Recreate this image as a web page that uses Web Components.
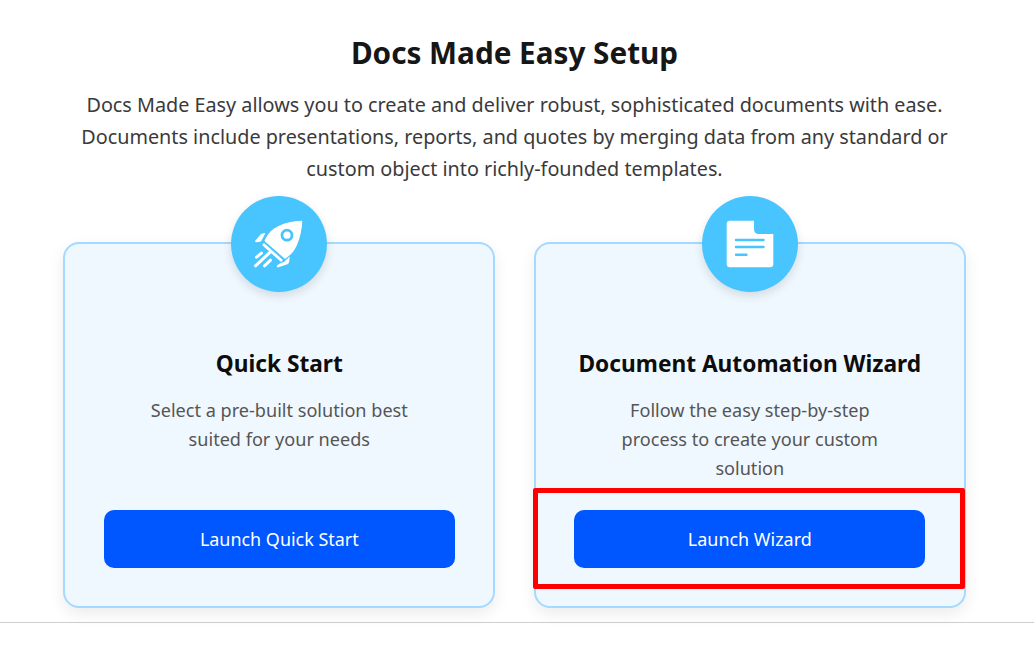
<!DOCTYPE html>
<html lang="en">
<head>
<meta charset="utf-8">
<title>Docs Made Easy Setup</title>
<style>
  html, body { margin: 0; padding: 0; background: #fff; }
  body { font-family: "Noto Sans", "Open Sans", sans-serif; }
</style>
</head>
<body>
<setup-page>
  <setup-card slot="cards" heading="Quick Start" action="Launch Quick Start" icon="rocket">
    Select a pre-built solution best<br>suited for your needs
  </setup-card>
  <setup-card slot="cards" heading="Document Automation Wizard" action="Launch Wizard" icon="doc" marked>
    Follow the easy step-by-step<br>process to create your custom<br>solution
  </setup-card>
</setup-page>
<script>
const setupPage = document.createElement('template')
setupPage.innerHTML = `
<style>
  :host {
    display: block;
    height: 656px;
    overflow: hidden;
  }
  header {
    text-align: center;
    padding: 32px 5px 0 0;
    height: 210px;
    box-sizing: border-box;
  }
  h1 {
    margin: 0;
    font-size: 29.7px;
    line-height: 42px;
    font-weight: 700;
    color: #161616;
  }
  p {
    margin: 15px 0 0;
    font-size: 19.8px;
    line-height: 32px;
    color: #3a3a3a;
  }
  .cards {
    display: grid;
    grid-template-columns: 432px 432px;
    column-gap: 38.5px;
    justify-content: start;
    padding: 32px 0 0 63.3px;
  }
  .rule {
    height: 1px;
    background: #cfcfcf;
    margin-top: 14px;
  }
</style>
<header>
  <h1>Docs Made Easy Setup</h1>
  <p>Docs Made Easy allows you to create and deliver robust, sophisticated documents with ease.<br>Documents include presentations, reports, and quotes by merging data from any standard or<br>custom object into richly-founded templates.</p>
</header>
<div class="cards"><slot name="cards"></slot></div>
<div class="rule"></div>
`

class SetupPage extends HTMLElement {
  constructor () {
    super()
    this.attachShadow({ mode: 'open' })
    this.shadowRoot.appendChild(setupPage.content.cloneNode(true))
  }
}

const icons = {
  rocket: `
    <path fill="#fff" d="M71.3 24.7C60 24.7 48 28 40 35C37.5 37.5 35 41 33.5 45L54 63C60 59 64 54 66 49C69 42 71 33 71.3 24.7Z"/>
    <circle cx="56" cy="39.2" r="5" fill="#fff" stroke="#48c4ff" stroke-width="2.8"/>
    <path fill="none" stroke="#fff" stroke-width="2.8" d="M32 48L51 65"/>
    <path fill="#fff" d="M34.5 37L31.5 37.4C30.5 37.6 29.8 38 29.3 38.7L24.4 44.5C23.7 45.5 24.3 46.4 25.5 46.2L30 45.5Z"/>
    <path fill="#fff" d="M58.7 60.5L58.2 65.5C58 66.8 57.5 67.6 56.4 68.2L47.5 71.3C46.2 71.8 45.2 70.6 46 69.6L49 67.3L53 66Z"/>
    <path fill="none" stroke="#fff" stroke-width="3" stroke-linecap="round" d="M25.5 61.2L30.5 57.2M24.5 69.8L38.7 56.6M33.5 69.8L39.5 64.2"/>`,
  doc: `
    <path fill="#fff" d="M27.7 24.7H52V33C52 36 54 38 57 38H71.3V68.3C71.3 70 70 71.3 68.3 71.3H27.7C26 71.3 24.7 70 24.7 68.3V27.7C24.7 26 26 24.7 27.7 24.7Z"/>
    <path fill="none" stroke="#48c4ff" stroke-width="2.4" stroke-linecap="round" d="M34 44H61.5M34 51H61.5M34 58.7H44.5"/>`
}

const setupCard = document.createElement('template')
setupCard.innerHTML = `
<style>
  :host {
    display: block;
    position: relative;
    height: 366px;
    box-sizing: border-box;
    border: 2px solid #a6d9ff;
    border-radius: 16px;
    background: #f0f8ff;
    box-shadow: 0 6px 16px rgba(0, 0, 0, 0.08);
    padding: 0 38.5px;
  }
  .body {
    display: flex;
    flex-direction: column;
    align-items: center;
    height: 100%;
    text-align: center;
  }
  .badge {
    position: absolute;
    left: 50%;
    top: -48px;
    margin-left: -48px;
    width: 96px;
    height: 96px;
    border-radius: 50%;
    background: #48c4ff;
    box-shadow: 0 4px 10px rgba(0, 0, 0, 0.12);
  }
  .badge svg { display: block; }
  h2 {
    margin: 103px 0 0;
    font-size: 22.7px;
    line-height: 34px;
    font-weight: 700;
    color: #0d0d0d;
  }
  .text {
    margin-top: 15px;
    font-size: 18.1px;
    line-height: 29px;
    color: #555;
  }
  button {
    margin-top: auto;
    margin-bottom: 38px;
    width: 100%;
    height: 58px;
    flex: none;
    border: none;
    border-radius: 10px;
    background: #0056ff;
    color: #fff;
    font: inherit;
    font-size: 17.94px;
  }
  .mark {
    position: absolute;
    left: -3px;
    top: 244px;
    width: 432px;
    height: 101px;
    box-sizing: border-box;
    border: 5px solid #ff0000;
    border-radius: 2px;
    pointer-events: none;
  }
</style>
<div class="badge"></div>
<div class="body">
  <h2></h2>
  <div class="text"><slot></slot></div>
  <button type="button"></button>
</div>
`

class SetupCard extends HTMLElement {
  constructor () {
    super()
    this.attachShadow({ mode: 'open' })
    this.shadowRoot.appendChild(setupCard.content.cloneNode(true))
  }

  connectedCallback () {
    const root = this.shadowRoot
    root.querySelector('h2').textContent = this.getAttribute('heading')
    root.querySelector('button').textContent = this.getAttribute('action')
    root.querySelector('.badge').innerHTML =
      `<svg width="96" height="96" viewBox="0 0 96 96">${icons[this.getAttribute('icon')]}</svg>`
    if (this.hasAttribute('marked')) {
      const mark = document.createElement('div')
      mark.className = 'mark'
      root.appendChild(mark)
    }
  }
}

window.customElements.define('setup-page', SetupPage)
window.customElements.define('setup-card', SetupCard)
</script>
</body>
</html>
